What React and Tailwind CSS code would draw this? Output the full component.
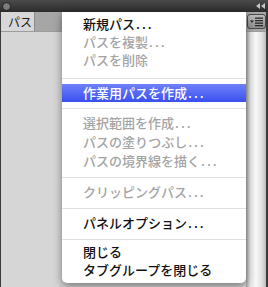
import React from "react";

const font = { fontFamily: '"Noto Sans CJK JP", "Noto Sans", sans-serif' };

const MenuItem = ({ label, dots, disabled, active, tall }) => (
  <div
    className={`flex items-center pl-[21px] text-[13px] font-medium whitespace-nowrap ${
      tall ? "h-[19px]" : "h-[18px]"
    } ${
      active
        ? "bg-gradient-to-b from-[#7080f8] to-[#3a4ef0] text-white"
        : disabled
        ? "text-[#a4a4a4]"
        : "text-[#111]"
    }`}
  >
    {label}
    {dots && <span className="ml-[1px] tracking-[2px]">...</span>}
  </div>
);

const Sep = ({ top, bottom }) => (
  <div className={top}>
    <div className={`h-px bg-[#e0e0e0] ${bottom}`} />
  </div>
);

const App = () => {
  return (
    <div
      className="relative w-[268px] h-[287px] overflow-hidden flex flex-col bg-[#2e2e2e]"
      style={font}
    >
      {/* title bar */}
      <div className="h-[12px] flex items-center justify-between px-[2px] bg-gradient-to-b from-[#4a4a4a] to-[#2c2c2c]">
        <div className="w-[9px] h-[9px] rounded-full bg-[#7c7c7c] border border-[#1e1e1e]" />
        <svg width="9" height="6" viewBox="0 0 9 6" className="mr-[1px]">
          <polygon points="0,3 4,0 4,6" fill="#c4c4c4" />
          <polygon points="5,3 9,0 9,6" fill="#c4c4c4" />
        </svg>
      </div>

      <div className="flex-1 flex">
        <div className="w-px bg-[#3a3a3a]" />
        <div className="flex-1 flex flex-col">
          {/* tab row */}
          <div className="h-[19px] flex bg-[#a6a6a6]">
            <div className="w-[34px] bg-[#d7d7d7] border-r border-[#8c8c8c] pl-[7px] text-[12px] leading-[19px] text-[#1a1a1a]">
              パス
            </div>
            <div className="flex-1" />
            <div className="w-[20px] flex items-center justify-center">
              <svg width="19" height="15" viewBox="0 0 19 15">
                <defs>
                  <linearGradient id="ig" x1="0" y1="0" x2="0" y2="1">
                    <stop offset="0" stopColor="#bdbdbd" />
                    <stop offset="1" stopColor="#8e8e8e" />
                  </linearGradient>
                </defs>
                <rect x="0.5" y="0.5" width="18" height="14" rx="2.5" fill="url(#ig)" stroke="#4c4c4c" />
                <polygon points="3,6.5 7,6.5 5,9" fill="#2a2a2a" />
                <rect x="8" y="3.5" width="8" height="1.3" fill="#2a2a2a" />
                <rect x="8" y="6" width="8" height="1.3" fill="#2a2a2a" />
                <rect x="8" y="8.5" width="8" height="1.3" fill="#2a2a2a" />
                <rect x="8" y="11" width="8" height="1.3" fill="#2a2a2a" />
              </svg>
            </div>
          </div>
          {/* body */}
          <div className="flex-1 flex border-t border-[#9c9c9c]">
            <div className="flex-1 bg-[#d6d6d6]" />
            <div className="w-[20px] bg-[linear-gradient(to_right,#a8a8a8_0%,#e4e4e4_20%,#f8f8f8_50%,#dedede_80%,#bcbcbc_100%)]" />
          </div>
        </div>
        <div className="w-[2px] bg-[#3a3a3a]" />
      </div>

      {/* popup menu */}
      <div className="absolute left-[62px] top-[12px] w-[184px] h-[271px] bg-white rounded-b-[5px] shadow-[0_3px_9px_rgba(0,0,0,0.45)] pt-[3px]">
        <MenuItem label="新規パス" dots />
        <MenuItem label="パスを複製" dots disabled />
        <MenuItem label="パスを削除" disabled />
        <Sep top="pt-[9px]" bottom="mb-[5px]" />
        <MenuItem label="作業用パスを作成" dots active />
        <Sep top="pt-[6px]" bottom="mb-[4px]" />
        <MenuItem label="選択範囲を作成" dots disabled tall />
        <MenuItem label="パスの塗りつぶし" dots disabled tall />
        <MenuItem label="パスの境界線を描く" dots disabled tall />
        <Sep top="pt-[7px]" bottom="mb-[5px]" />
        <MenuItem label="クリッピングパス" dots disabled />
        <Sep top="pt-[7px]" bottom="mb-[5px]" />
        <MenuItem label="パネルオプション" dots />
        <Sep top="pt-[7px]" bottom="mb-[3px]" />
        <MenuItem label="閉じる" />
        <MenuItem label="タブグループを閉じる" />
      </div>
    </div>
  );
};

export default App;
